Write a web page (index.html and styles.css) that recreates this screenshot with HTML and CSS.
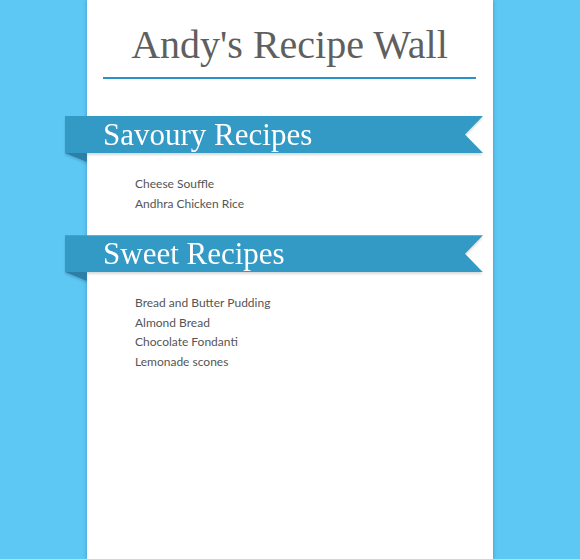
FILE: index.html
```html
<!DOCTYPE html>
<html lang="en">
<head>
  <meta charset="UTF-8">
  <title>Andy's Recipe Wall</title>
  <link rel="stylesheet" href="styles.css">
</head>
<body>
<div class="wall">
  <h1 class="title">Andy's Recipe Wall</h1>

  <div class="section">
    <div class="banner">
      <h2 class="ribbon">Savoury Recipes</h2>
    </div>
    <ul class="recipes">
      <li>Cheese Souffle</li>
      <li>Andhra Chicken Rice</li>
    </ul>
  </div>

  <div class="section">
    <div class="banner">
      <h2 class="ribbon">Sweet Recipes</h2>
    </div>
    <ul class="recipes">
      <li>Bread and Butter Pudding</li>
      <li>Almond Bread</li>
      <li>Chocolate Fondanti</li>
      <li>Lemonade scones</li>
    </ul>
  </div>
</div>
</body>
</html>
```

FILE: styles.css
```css
html, body {
  height: 100%;
}
body {
  margin: 0;
  background-color: #5ec8f4;
  font-family: Lato, "Liberation Sans", sans-serif;
}
.wall {
  width: 406px;
  min-height: 100%;
  margin: 0 auto;
  background-color: white;
  box-shadow: 0 0 4px rgba(0, 60, 100, 0.35);
  padding-top: 24px;
  box-sizing: border-box;
}
.title {
  margin: 0 17px 0 16px;
  padding-bottom: 11px;
  border-bottom: 2px solid #2a92c8;
  font-family: "Liberation Serif", serif;
  font-weight: normal;
  font-size: 40px;
  line-height: 42px;
  color: #5f5f5f;
  text-align: center;
}
.section {
  margin-top: 37px;
}
.section + .section {
  margin-top: 22px;
}
.banner {
  position: relative;
  margin-left: -22px;
  width: 418px;
  filter: drop-shadow(0 2px 1px rgba(0, 0, 0, 0.15));
}
.banner::before {
  content: "";
  position: absolute;
  left: 0;
  top: 37px;
  border-top: 9px solid #2b7fa8;
  border-left: 22px solid transparent;
}
.ribbon {
  margin: 0;
  height: 37px;
  padding-left: 38px;
  background-color: #3399c5;
  clip-path: polygon(0 0, 100% 0, calc(100% - 18px) 50%, 100% 100%, 0 100%);
  font-family: "Liberation Serif", serif;
  font-weight: normal;
  font-size: 31px;
  line-height: 37px;
  color: white;
}
.recipes {
  list-style: none;
  margin: 0;
  padding: 21px 0 0 48px;
  font-size: 12px;
  line-height: 19.6px;
  color: #555;
}
```
